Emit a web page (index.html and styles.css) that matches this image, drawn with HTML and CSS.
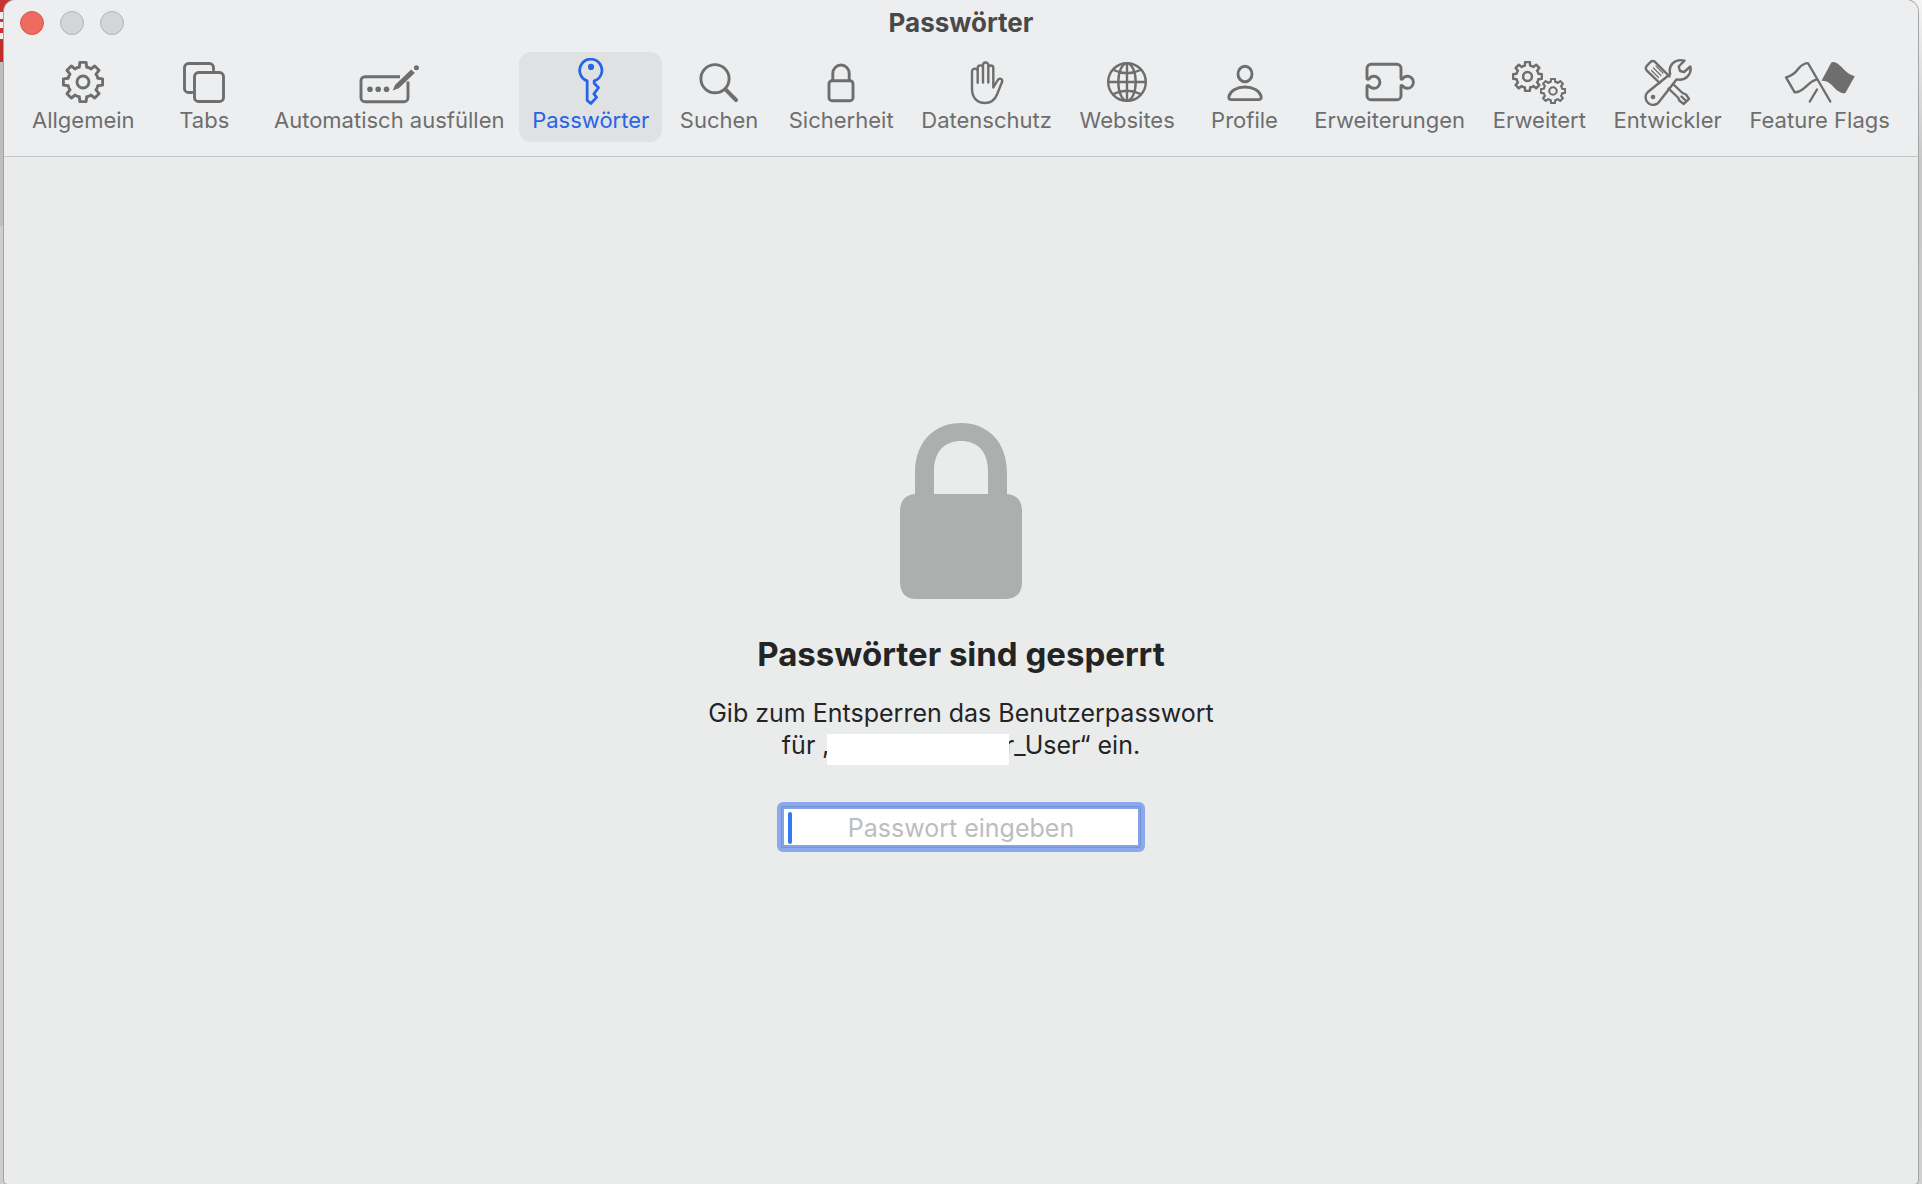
FILE: index.html
```
<!DOCTYPE html>
<html lang="de">
<head>
  <meta charset="utf-8">
  <link rel="stylesheet" href="styles.css">
  <title>Passwörter</title>
</head>
<body>
  <svg class="defs" aria-hidden="true">
    <symbol id="gear" viewBox="-21 -21 42 42">
      <path d="M-3.7-14.7L-3.1-19.6H3.1L3.7-14.7Q6-14.6 7.8-13L11.7-16L16-11.7L13-7.8Q14.6-6 14.7-3.7L19.6-3.1V3.1L14.7 3.7Q14.6 6 13 7.8L16 11.7L11.7 16L7.8 13Q6 14.6 3.7 14.7L3.1 19.6H-3.1L-3.7 14.7Q-6 14.6-7.8 13L-11.7 16L-16 11.7L-13 7.8Q-14.6 6-14.7 3.7L-19.6 3.1V-3.1L-14.7-3.7Q-14.6-6-13-7.8L-16-11.7L-11.7-16L-7.8-13Q-6-14.6-3.7-14.7Z"/>
      <circle r="6"/>
    </symbol>
  </svg>

  <div class="window">
    <header class="toolbar">
      <div class="titlebar">
        <div class="lights">
          <button class="light close" aria-label="Schließen"></button>
          <button class="light" aria-label="Minimieren"></button>
          <button class="light" aria-label="Zoomen"></button>
        </div>
        <h1 class="title">Passwörter</h1>
      </div>

      <nav class="tabs">
        <button class="tab">
          <svg class="icon" width="42" height="48"><use href="#gear" x="0" y="3" width="42" height="42"/></svg>
          <span>Allgemein</span>
        </button>
        <button class="tab">
          <svg class="icon" width="44" height="48">
            <rect x="12.5" y="14.5" width="29" height="29" rx="4"/>
            <path d="M31.5 12V9.5a4 4 0 0 0-4-4h-21a4 4 0 0 0-4 4v21a4 4 0 0 0 4 4H10"/>
          </svg>
          <span>Tabs</span>
        </button>
        <button class="tab">
          <svg class="icon" width="60" height="48">
            <path class="butt" d="M41 18.7H6a4 4 0 0 0-4 4v17a4 4 0 0 0 4 4h39a4 4 0 0 0 4-4V23.5"/>
            <g class="solid">
              <circle cx="11" cy="31.3" r="2.8"/>
              <circle cx="19.2" cy="31.3" r="2.8"/>
              <circle cx="27.5" cy="31.3" r="2.8"/>
              <path d="M33.6 32.6L36.2 26.8L52.2 11.6L55.8 15L39.8 30.2Z"/>
              <circle cx="57.4" cy="9.8" r="2.5"/>
            </g>
          </svg>
          <span>Automatisch ausfüllen</span>
        </button>
        <button class="tab active" aria-current="page">
          <svg class="icon" width="28" height="50" viewBox="0 0 28 50">
            <path d="M10 23.8V44.2L13.8 47.4L19.8 41L17 37.3L21.8 31L17.3 26.3V23.9A11.6 11.6 0 1 0 10 23.8Z"/>
            <circle class="solid" cx="14" cy="9.3" r="3.2"/>
          </svg>
          <span>Passwörter</span>
        </button>
        <button class="tab">
          <svg class="icon" width="40" height="48">
            <circle cx="16" cy="20.7" r="14.1"/>
            <path class="thick" d="M27 31.8L37 42"/>
          </svg>
          <span>Suchen</span>
        </button>
        <button class="tab">
          <svg class="icon" width="28" height="48">
            <rect x="2" y="22.7" width="24" height="20" rx="3"/>
            <path d="M5.8 22V15.4a8.2 8.4 0 0 1 16.4 0V22"/>
          </svg>
          <span>Sicherheit</span>
        </button>
        <button class="tab">
          <svg class="icon thin" width="34" height="48">
            <path d="M7.7 24.7V13.5a2.85 2.85 0 0 0-5.7 0V31c0 9 5.5 14 13 14c6 0 9.8-3 12-8.5L32 24c1.2-3-2.8-4.5-4.2-2L23.3 29.5V10a2.5 2.5 0 0 0-5 0M18.3 24.5V7.2a2.65 2.65 0 0 0-5.3 0V24.5M13 10a2.65 2.65 0 0 0-5.3 0V14.5"/>
          </svg>
          <span>Datenschutz</span>
        </button>
        <button class="tab">
          <svg class="icon thin" width="42" height="48">
            <circle cx="21" cy="24" r="18.8"/>
            <ellipse cx="21" cy="24" rx="8.7" ry="18.8"/>
            <path d="M21 5.2V42.8M2.2 24H39.8M7.5 12Q21 18.5 34.5 12M7.5 36Q21 29.5 34.5 36"/>
          </svg>
          <span>Websites</span>
        </button>
        <button class="tab">
          <svg class="icon" width="36" height="48">
            <ellipse cx="18" cy="16" rx="7" ry="7.8"/>
            <path d="M4 41.6H32C34 41.6 34.5 40.3 34 38.2C32.5 32.5 26 29 18 29S3.5 32.5 2 38.2C1.5 40.3 2 41.6 4 41.6Z"/>
          </svg>
          <span>Profile</span>
        </button>
        <button class="tab">
          <svg class="icon" width="50" height="48">
            <path d="M2 10.3a4 4 0 0 1 4-4H32a4 4 0 0 1 4 4V20.5C36 21.5 37 21.3 37.7 20.6A6 6 0 1 1 37.7 28C37 27.3 36 27.1 36 28.1V37.7a4 4 0 0 1-4 4H6a4 4 0 0 1-4-4V28.1C2 27.1 3.5 27.3 4.2 28A6 6 0 1 0 4.2 20.6C3.5 21.3 2 21.5 2 20.5Z"/>
          </svg>
          <span>Erweiterungen</span>
        </button>
        <button class="tab">
          <svg class="icon gears" width="56" height="48">
            <use href="#gear" x="1" y="3" width="31" height="31"/>
            <use href="#gear" x="29" y="20" width="26" height="26"/>
          </svg>
          <span>Erweitert</span>
        </button>
        <button class="tab">
          <svg class="icon thin" width="48" height="48">
            <path d="M25.5 18.5L11 3.8Q8.7 2 6.5 4L3 7.6Q.7 10 2.8 12.6L15.7 25"/>
            <path class="hair" d="M7.5 12.5L14.5 19.5M9.5 10L17 17.5M12 8L19 15"/>
            <path d="M24.5 30.5L34 39.5L35.5 42.8L39.8 46L45 41L42 36.5L38.5 35L29 26M37.5 38.5L41.5 42.5"/>
            <path d="M40.5 2.6L34.7 8.5L36 13L40.2 14L46.3 8.5C48 15.5 42 23.5 32.5 21.4L15.5 43.3A7.5 7.5 0 1 1 4.2 33.7L26.2 16C24 8 30 .2 40.5 2.6Z"/>
            <circle class="solid" cx="9" cy="39" r="2.3"/>
          </svg>
          <span>Entwickler</span>
        </button>
        <button class="tab">
          <svg class="icon thin" width="72" height="48">
            <path d="M46.3 43.5L24.5 6C23.5 4 17.5 6.500 14.500 10.500C11 15.500 7 18.200 2 19.300L10.700 34.300C20 34.500 23 24 32.500 21.700M25.800 43.500L33 31.500"/>
            <path class="solid" d="M46.8 5.5C47.5 3.8 49.5 3.6 51.5 4.5C58 7 61 16 70.8 18.2L61.5 34.8C60.5 36.5 54 34 50 29.500C46.500 25.500 43 22.500 37.500 22.800Z"/>
          </svg>
          <span>Feature Flags</span>
        </button>
      </nav>
    </header>

    <main class="content">
      <svg class="lock" width="122" height="176" viewBox="0 0 122 176" aria-hidden="true">
        <path d="M15 71V50C15 18 35 0 61 0S107 18 107 50V71C117 72 122 78 122 88V159C122 170 116 176 106 176H16C6 176 0 170 0 159V88C0 78 5 72 15 71ZM34 71H88V48C88 28 77 18 61 18S34 28 34 48Z"/>
      </svg>
      <h2 class="heading">Passwörter sind gesperrt</h2>
      <p class="message">Gib zum Entsperren das Benutzerpasswort<br>für „<span class="redacted"></span>r_User“ ein.</p>
      <form class="field">
        <input type="password" placeholder="Passwort eingeben" aria-label="Passwort eingeben">
        <span class="caret"></span>
      </form>
    </main>
  </div>
</body>
</html>
```
FILE: styles.css
```
* { box-sizing: border-box; }

body {
  margin: 0;
  padding: 0 4px;
  font-family: Inter, "Liberation Sans", sans-serif;
  color: #242424;
  /* strips of the desktop at both sides of the window */
  background:
    linear-gradient(#c93430 0 12px, #f1eeee 12px 19px, #c93430 19px 22px, #f1eeee 22px 28px, #c93430 28px 33px, #f1eeee 33px 39px, #c12f2c 39px 62px, #bebebe 62px 226px, #cecece 226px) left / 16px 100% no-repeat,
    linear-gradient(#f4f4f4, #c8c8c8 160px, #cfcfcf);
}

button {
  margin: 0;
  border: 0;
  background: none;
  font: inherit;
  color: inherit;
}

.defs {
  position: absolute;
  width: 0;
  height: 0;
}

.window {
  display: flex;
  flex-direction: column;
  min-height: 100vh;
  border-radius: 12px 12px 4px 4px;
  background: #eaeceb;
  box-shadow: 0 0 0 1px #a3a3a3;
  overflow: hidden;
}

/* toolbar */
.toolbar {
  background: #edeef0;
  border-bottom: 1px solid #c4c6c7;
}

.titlebar {
  display: grid;
  grid-template-columns: 1fr auto 1fr;
  align-items: center;
  height: 46px;
  padding: 0 16px;
}

.lights {
  display: flex;
  gap: 16px;
}

.light {
  width: 24px;
  height: 24px;
  padding: 0;
  border: 1px solid #b2b3b4;
  border-radius: 50%;
  background: #d4d5d6;
}
.light.close {
  border-color: #d9584e;
  background: #ed6b5f;
}

.title {
  margin: 0;
  font-size: 26px;
  line-height: 30px;
  font-weight: 700;
  color: #494949;
}

.tabs {
  display: flex;
  justify-content: space-between;
  padding: 6px 15px 14px;
}

.tab {
  display: flex;
  flex-direction: column;
  align-items: center;
  justify-content: flex-start;
  min-width: 110px;
  height: 90px;
  padding: 6px 13px;
  border-radius: 12px;
  font-size: 22px;
  line-height: 28px;
  color: #6d6e6d;
  white-space: nowrap;
}
.tab.active {
  background: #e0e1e3;
  color: #2864e6;
}

.icon {
  flex: none;
  height: 48px;
  fill: none;
  stroke: currentColor;
  stroke-width: 2.9;
  stroke-linecap: round;
  stroke-linejoin: round;
}
.icon.thin { stroke-width: 2.4; }
.icon.gears { stroke-width: 3.4; }
.icon .thick { stroke-width: 4; }
.icon .hair { stroke-width: 1.2; }
.icon .butt { stroke-linecap: butt; }
.icon .solid {
  fill: currentColor;
  stroke: none;
}

/* locked state */
.content {
  flex: 1;
  display: flex;
  flex-direction: column;
  align-items: center;
  padding: 266px 20px 40px;
  text-align: center;
}

.lock { fill: #adafae; }

.heading {
  margin: 35px 0 0;
  font-size: 33px;
  line-height: 40px;
  font-weight: 700;
}

.message {
  margin: 23px 0 0;
  font-size: 25px;
  line-height: 32px;
}

/* painted over the letters next to it */
.redacted {
  position: relative;
  display: inline-block;
  width: 182px;
  height: 31px;
  margin: -4px -4px -4px -6px;
  background: #fff;
  vertical-align: -7px;
}

.field {
  position: relative;
  margin-top: 41px;
}
.field input {
  display: block;
  width: 354px;
  height: 36px;
  margin: 7px;
  padding: 2px 4px 0;
  border: 0;
  outline: 0;
  background: #fff;
  box-shadow: 0 0 0 2px #84a2e6, 0 0 0 3px #7592d8, 0 0 0 4px #84a2e6;
  font: inherit;
  font-size: 25px;
  text-align: center;
}
.field::before {
  content: "";
  position: absolute;
  inset: 0;
  border: 4px solid #8ca9ee;
  border-radius: 6px;
  pointer-events: none;
}
.field input::placeholder {
  color: #bdbdbd;
  opacity: 1;
}

.caret {
  position: absolute;
  top: 10px;
  left: 11px;
  width: 4px;
  height: 32px;
  border-radius: 2px;
  background: #3478f6;
}
```
